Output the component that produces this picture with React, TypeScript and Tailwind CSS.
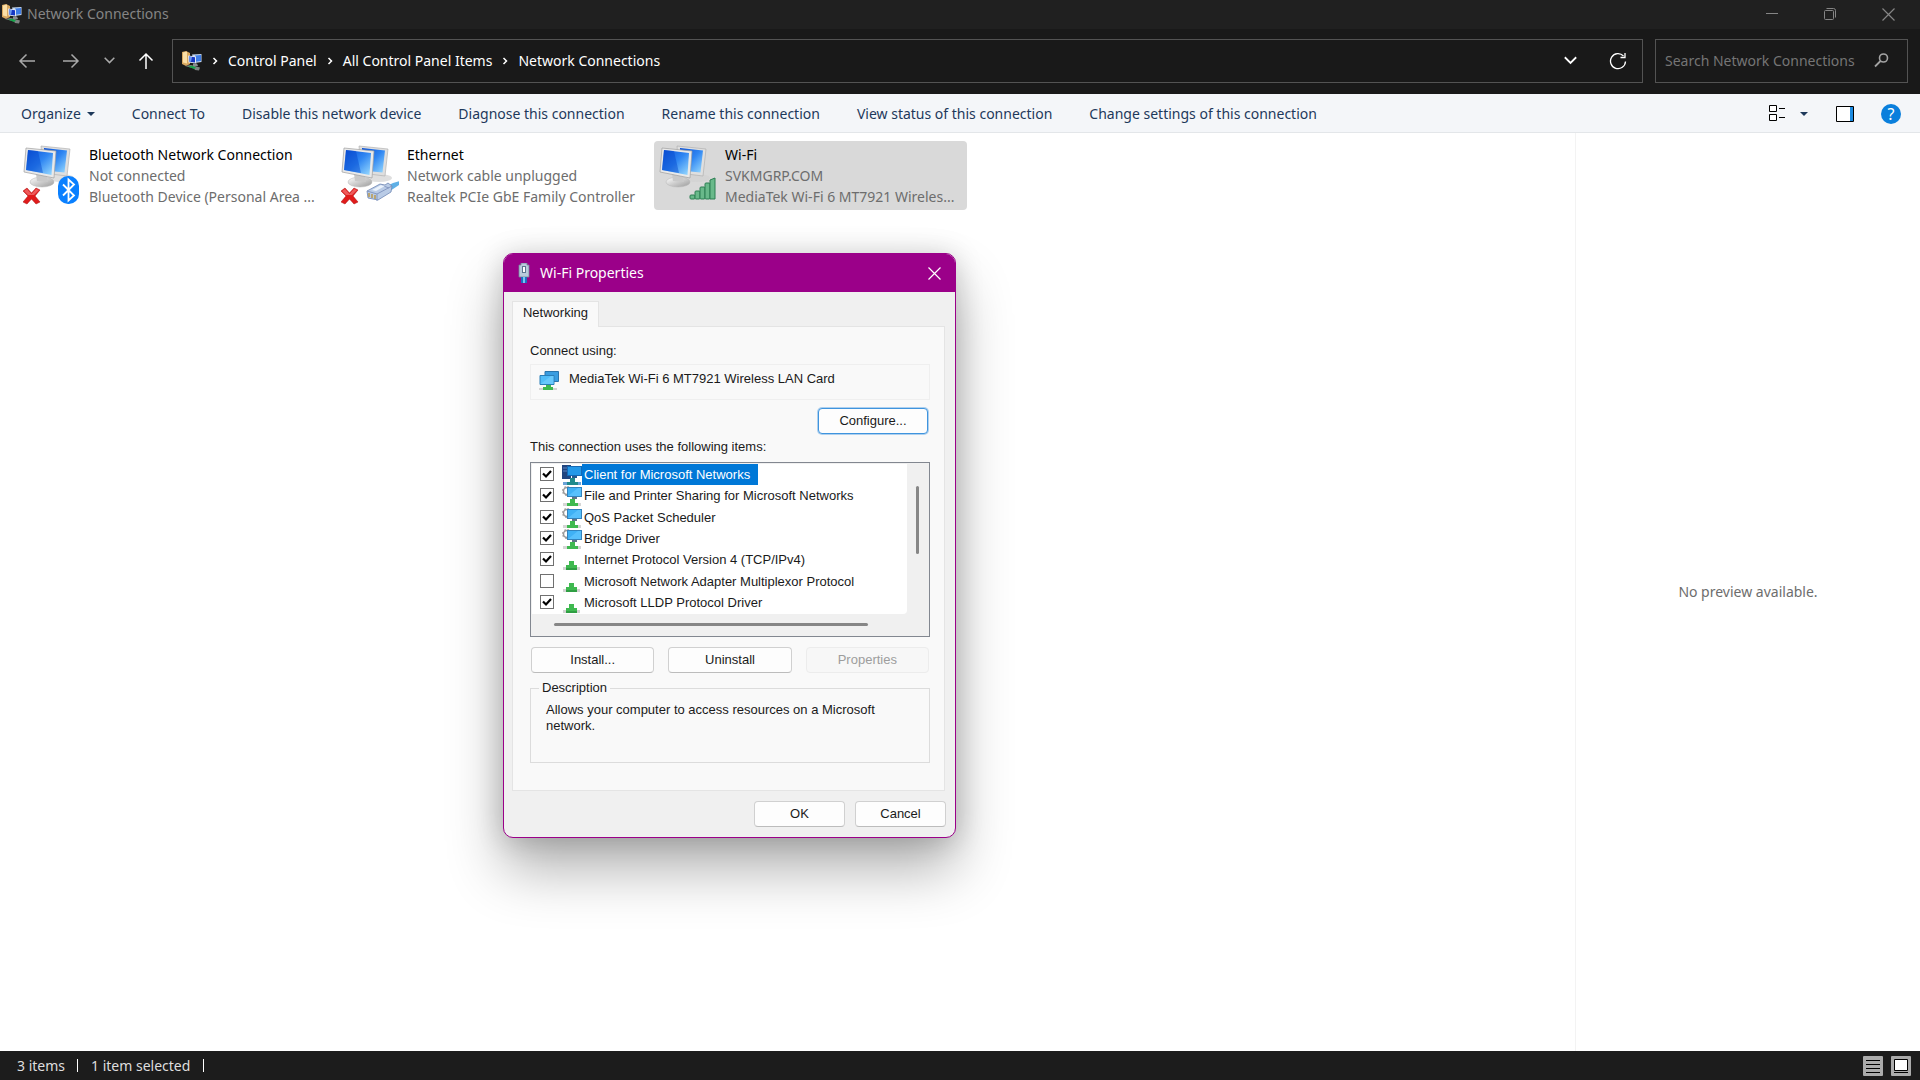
import { useState, type ReactNode } from "react";

interface Connection {
  name: string;
  status: string;
  device: string;
  kind: "bluetooth" | "ethernet" | "wifi";
}

const connections: Connection[] = [
  {
    name: "Bluetooth Network Connection",
    status: "Not connected",
    device: "Bluetooth Device (Personal Area ...",
    kind: "bluetooth",
  },
  {
    name: "Ethernet",
    status: "Network cable unplugged",
    device: "Realtek PCIe GbE Family Controller",
    kind: "ethernet",
  },
  {
    name: "Wi-Fi",
    status: "SVKMGRP.COM",
    device: "MediaTek Wi-Fi 6 MT7921 Wireles...",
    kind: "wifi",
  },
];

const commands = [
  "Connect To",
  "Disable this network device",
  "Diagnose this connection",
  "Rename this connection",
  "View status of this connection",
  "Change settings of this connection",
];

const crumbs = ["Control Panel", "All Control Panel Items", "Network Connections"];

interface Item {
  label: string;
  icon: "client" | "service" | "protocol";
  checked: boolean;
}

const initialItems: Item[] = [
  { label: "Client for Microsoft Networks", icon: "client", checked: true },
  { label: "File and Printer Sharing for Microsoft Networks", icon: "service", checked: true },
  { label: "QoS Packet Scheduler", icon: "service", checked: true },
  { label: "Bridge Driver", icon: "service", checked: true },
  { label: "Internet Protocol Version 4 (TCP/IPv4)", icon: "protocol", checked: true },
  { label: "Microsoft Network Adapter Multiplexor Protocol", icon: "protocol", checked: false },
  { label: "Microsoft LLDP Protocol Driver", icon: "protocol", checked: true },
];

function FolderNetworkIcon() {
  return (
    <svg width="20" height="20" viewBox="0 0 20 20" className="shrink-0">
      <path d="M0 1l4-1 4 2v11l-4 2-4-2z" fill="#d9a860" />
      <path d="M1 1.500l4-1v12l-4-1z" fill="#fbdfa6" />
      <path d="M10 3.500l9.500-.5v8l-7 1z" fill="#c3d6ee" />
      <path d="M13 4.500l6-.5v6l-5 .8z" fill="#3f7de6" />
      <path d="M6 4.500l8 1v7l-7.500-1z" fill="#dfe7f2" />
      <path d="M7 5.500l6 .8v5.200l-5.500-.8z" fill="#1637c4" />
      <path d="M7 5.500l3 .4-1 4.900-1.500-.1z" fill="#6d97f0" />
      <path d="M11 12.500h4l1 2.500h-5z" fill="#8c9094" />
      <path d="M3 15l6-1 9 2.500-1 3-4-.5-1-1.500z" fill="#7d8482" />
      <path d="M6 15.500l4-.8 4 1.800-2 1.500z" fill="#16a34a" />
    </svg>
  );
}

function Chevron({ down = false, size = 8 }: { down?: boolean; size?: number }) {
  return (
    <svg width={size} height={size} viewBox="0 0 8 8" fill="none" stroke="currentColor" strokeWidth="1.1">
      {down ? <path d="M0.500 2l3.500 3.500L7.500 2" /> : <path d="M2.500 1l3 3-3 3" strokeWidth="1.500" />}
    </svg>
  );
}

function Arrow({ d }: { d: string }) {
  return (
    <svg width="18" height="18" viewBox="0 0 18 18" fill="none" stroke="currentColor" strokeWidth="1.500">
      <path d={d} />
    </svg>
  );
}

function CaretDown() {
  return (
    <svg width="8" height="4" viewBox="0 0 8 4">
      <path d="M0 0h8L4 4z" fill="currentColor" />
    </svg>
  );
}

function CloseIcon() {
  return (
    <svg width="13" height="13" viewBox="0 0 13 13" fill="none" stroke="currentColor" strokeWidth="1.2">
      <path d="M0.500 0.500l12 12M12.500 0.500l-12 12" />
    </svg>
  );
}

function ConnectionIcon({ kind }: { kind: Connection["kind"] }) {
  const id = `screen-${kind}`;
  return (
    <svg width="58" height="60" viewBox="0 0 58 60" className="shrink-0">
      <defs>
        <linearGradient id={id} x1="0" y1="0" x2="1" y2="1">
          <stop offset="0" stopColor="#0a4fd6" />
          <stop offset="0.500" stopColor="#2f86f2" />
          <stop offset="1" stopColor="#9bdcff" />
        </linearGradient>
        <linearGradient id={`${id}-base`} x1="0" y1="0" x2="1" y2="1">
          <stop offset="0" stopColor="#ffffff" />
          <stop offset="1" stopColor="#9a9a9a" />
        </linearGradient>
      </defs>
      <ellipse cx="38" cy="33" rx="13" ry="4" fill="#d2d2d2" opacity="0.7" />
      <path d="M18 1l29 3-3 27-24-3z" fill="#dfdfdf" stroke="#a9a9a9" strokeWidth="0.600" />
      <path d="M21 3l23 2.500-2.500 22-20-2z" fill={`url(#${id})`} />
      <ellipse cx="19" cy="37" rx="12" ry="5" fill={`url(#${id}-base)`} stroke="#b5b5b5" strokeWidth="0.500" />
      <path d="M13 29l11 2 1 6-11-1z" fill="#c9c9c9" />
      <path d="M3 3l30 3-2 27L1 27z" fill="#e9e9e9" stroke="#9f9f9f" strokeWidth="0.700" />
      <path d="M5 5l25 3-1.500 22L3 25z" fill={`url(#${id})`} />
      <path d="M5 5l10 1 5 22-17-3z" fill="#0446cd" opacity="0.450" />
      {kind !== "wifi" && (
        <g>
          <path
            d="M0 46l4-3 4.500 5L13 43l4 2-5 6 5 6-4 2-4.500-5L4 59l-4-2 5-6z"
            fill="#e01b1b"
            stroke="#a80f0f"
            strokeWidth="0.500"
          />
          <path d="M1 46l3-2 4.500 5L13 44l3 1-5 5-6 0z" fill="#f16a6a" opacity="0.800" />
        </g>
      )}
      {kind === "bluetooth" && (
        <g>
          <rect x="35" y="31" width="21" height="28" rx="10" fill="#0a80ff" />
          <path d="M40 39.500l11 11-5.500 5v-21l5.500 5-11 11" fill="none" stroke="#fff" strokeWidth="1.800" />
        </g>
      )}
      {kind === "ethernet" && (
        <g>
          <path d="M44 42l8-4 7-2-1 4-9 6z" fill="#5fb0e6" />
          <path d="M26 46l13-7 5 1 3-2 4 3-1 6-13 8-10-2z" fill="#b9cbe6" stroke="#6f86b4" strokeWidth="0.800" />
          <path d="M26 46l10 3 15-8M36 49v7M40 40l8 3" fill="none" stroke="#7f93bd" strokeWidth="0.900" />
          <path d="M28 48v4M31 49v4M34 50v4" stroke="#b99b50" strokeWidth="1.500" />
          <path d="M31 45l9-5 4 1-9 5z" fill="#eaf2fc" />
        </g>
      )}
      {kind === "wifi" && (
        <g fill="#69b98a" stroke="#2d7f53" strokeWidth="1">
          <rect x="31" y="50" width="5" height="4" rx="1" />
          <rect x="36" y="46" width="5" height="8" rx="1" />
          <rect x="41" y="42" width="5" height="12" rx="1" />
          <rect x="46" y="38" width="5" height="16" rx="1" />
          <path d="M51 35l5-2v21h-5z" />
        </g>
      )}
    </svg>
  );
}

function ItemIcon({ icon }: { icon: Item["icon"] }) {
  return (
    <svg width="20" height="20" viewBox="0 0 20 20" className="shrink-0">
      {icon === "service" && (
        <g>
          <circle cx="5" cy="5" r="3.500" fill="none" stroke="#9a9a9a" strokeWidth="1.500" />
          <circle cx="5" cy="5" r="4.600" fill="none" stroke="#9a9a9a" strokeWidth="1" strokeDasharray="1.800 1.800" />
          <rect x="5.500" y="1.500" width="14" height="9" fill="#3fb1f5" stroke="#3383bd" />
          <path d="M6 10L16 2h3v8z" fill="#63c6ff" opacity="0.700" />
          <path d="M10 11h5v2h-5z" fill="#5f7486" />
          <path d="M1 17h18v3H1z" fill="#d6d6d6" />
          <path d="M8 13h5v4h3v3H5v-3h3z" fill="#3fb950" />
        </g>
      )}
      {icon === "client" && (
        <g>
          <path d="M0 0h9v14H0z" fill="#20457f" />
          <path d="M1 3h4M1 6h4" stroke="#5d87c4" />
          <rect x="5.500" y="1.500" width="14" height="9" fill="#2398e8" stroke="#1469b5" />
          <path d="M10 11h5v2h-5z" fill="#24598f" />
          <path d="M1 17h18v3H1z" fill="#6aa3d8" />
          <path d="M8 13h5v4h3v3H5v-3h3z" fill="#1f8a8c" />
        </g>
      )}
      {icon === "protocol" && (
        <g>
          <path d="M1 17h17v3H1z" fill="#d3d3d3" />
          <path d="M7 11h5v4h3v4H4v-4h3z" fill="#3fb950" />
          <path d="M4 18h11v2H4z" fill="#2f9e43" />
        </g>
      )}
    </svg>
  );
}

function DialogButton({
  children,
  className = "border-[#d0d0d0] border-b-[#bcbcbc]",
  disabled = false,
}: {
  children: ReactNode;
  className?: string;
  disabled?: boolean;
}) {
  return (
    <button
      type="button"
      disabled={disabled}
      className={`h-[26px] rounded border bg-[#fdfdfd] text-center disabled:border-[#ececec] disabled:bg-[#f7f7f7] disabled:text-[#9d9d9d] ${className}`}
    >
      {children}
    </button>
  );
}

function WifiProperties() {
  const [items, setItems] = useState(initialItems);

  const toggle = (index: number) => {
    setItems(items.map((item, i) => (i === index ? { ...item, checked: !item.checked } : item)));
  };

  return (
    <section
      role="dialog"
      aria-labelledby="dialog-title"
      className="absolute top-[253px] left-[503px] w-[453px] overflow-hidden rounded-[10px] border border-[#9b0089] bg-[#f0f0f0] font-['Liberation_Sans',Arial,sans-serif] text-[13px] leading-4 text-[#1a1a1a] shadow-[0_32px_56px_rgba(0,0,0,0.30),0_2px_28px_rgba(0,0,0,0.18)]"
    >
      <header className="flex h-[38px] items-center bg-[#9b0089] pr-[14px] pl-[14px] text-white">
        <svg width="12" height="20" viewBox="0 0 12 20" className="mr-[10px]">
          <path d="M3 0h6v2h2v12H1V2h2z" fill="#b9cbdc" stroke="#71859b" strokeWidth="0.800" />
          <path d="M4 3h4v7H4z" fill="#5d7690" />
          <path d="M5 4h2v5H5z" fill="#fff" />
          <path d="M3 14h6v6H3z" fill="#1d6fc0" />
          <path d="M5 14h2v6H5z" fill="#74c6f5" />
        </svg>
        <h2 id="dialog-title" className="font-['Noto_Sans',sans-serif] text-sm">
          Wi-Fi Properties
        </h2>
        <button type="button" aria-label="Close dialog" className="ml-auto">
          <CloseIcon />
        </button>
      </header>

      <div className="px-2 pt-[9px]">
        <div role="tablist" className="flex">
          <button
            type="button"
            role="tab"
            aria-selected="true"
            className="z-10 -mb-px h-[26px] w-[87px] border border-b-0 border-[#e4e4e4] bg-[#f9f9f9] pb-1"
          >
            Networking
          </button>
        </div>
        <div role="tabpanel" className="mr-[2px] flex flex-col border border-[#e4e4e4] bg-[#f9f9f9] pt-4 pr-[14px] pb-[27px] pl-[17px]">
          <p>Connect using:</p>
          <div className="mt-[5px] flex h-9 items-start border border-[#efefef] pt-[6px] pl-2">
            <svg width="20" height="20" viewBox="0 0 20 20" className="mr-[10px]">
              <path d="M6 .5h13.500v10H6z" fill="#3a9de0" stroke="#2a75ac" />
              <path d="M1 4.500h14v9H1z" fill="#52bdf8" stroke="#2b7fb8" />
              <path d="M1.500 13L12 5h2.500v8z" fill="#7ad0ff" opacity="0.600" />
              <path d="M0 17h18v2H0z" fill="#d3d3d3" />
              <path d="M7 14h5v2h2v3H4v-3h3z" fill="#3fb950" />
            </svg>
            <span>MediaTek Wi-Fi 6 MT7921 Wireless LAN Card</span>
          </div>
          <DialogButton className="mt-2 mr-[2px] w-[110px] self-end border-[#3f94de] ring-1 ring-[#3f94de]/40">
            Configure...
          </DialogButton>
          <p className="mt-[5px]">This connection uses the following items:</p>

          <div className="mt-[7px] border border-[#828790] bg-[#f0f0f0] p-px">
            <div className="flex">
              <ul className="grid h-[150px] flex-1 grid-rows-7 rounded-br bg-white">
                {items.map((item, index) => (
                  <li key={item.label}>
                    <label className="flex h-full items-center">
                      <span className="relative mb-[2px] ml-2 flex size-[14px]">
                        <input
                          type="checkbox"
                          checked={item.checked}
                          onChange={() => toggle(index)}
                          className="size-[14px] appearance-none border border-[#707070] bg-white"
                        />
                        {item.checked && (
                          <svg viewBox="0 0 14 14" className="pointer-events-none absolute inset-0" fill="none">
                            <path d="M3 6.500l3 3L11 4" stroke="#000" strokeWidth="2.200" />
                          </svg>
                        )}
                      </span>
                      <span className="ml-2 flex">
                        <ItemIcon icon={item.icon} />
                      </span>
                      <span
                        className={
                          index === 0
                            ? "flex h-full items-center bg-[#0078d7] pr-2 pl-[2px] text-white"
                            : "flex h-full items-center pl-[2px]"
                        }
                      >
                        {item.label}
                      </span>
                    </label>
                  </li>
                ))}
              </ul>
              <div className="w-[21px] pt-[22px] pl-[9px]">
                <div className="h-[68px] w-[3px] rounded-full bg-[#868686]" />
              </div>
            </div>
            <div className="h-[21px] pt-[9px] pr-[60px] pl-[22px]">
              <div className="h-[3px] rounded-full bg-[#868686]" />
            </div>
          </div>

          <div className="mt-[10px] grid grid-cols-3 gap-[14px] px-px">
            <DialogButton>Install...</DialogButton>
            <DialogButton>Uninstall</DialogButton>
            <DialogButton disabled>Properties</DialogButton>
          </div>

          <fieldset className="mt-[7px] h-[83px] border border-[#dcdcdc] pl-[15px]">
            <legend className="-ml-[7px] px-[3px]">Description</legend>
            <p className="mt-[6px] pr-10">Allows your computer to access resources on a Microsoft network.</p>
          </fieldset>
        </div>
      </div>

      <footer className="flex justify-end gap-[10px] py-[10px] pr-[9px]">
        <DialogButton className="w-[91px] border-[#d0d0d0] border-b-[#bcbcbc]">OK</DialogButton>
        <DialogButton className="w-[91px] border-[#d0d0d0] border-b-[#bcbcbc]">Cancel</DialogButton>
      </footer>
    </section>
  );
}

export default function App() {
  return (
    <div className="relative flex min-h-screen flex-col bg-white font-['Noto_Sans',sans-serif] text-sm text-black">
      <header className="flex h-[29px] items-center bg-[#202020] pb-px pl-[2px] text-[#858585]">
        <FolderNetworkIcon />
        <h1 className="ml-[5px]">Network Connections</h1>
        <div className="ml-auto flex items-center gap-[46px] pr-[25px]">
          <button type="button" aria-label="Minimize">
            <svg width="12" height="12" viewBox="0 0 12 12" stroke="currentColor">
              <path d="M0 5.500h12" />
            </svg>
          </button>
          <button type="button" aria-label="Restore">
            <svg width="12" height="12" viewBox="0 0 12 12" fill="none" stroke="currentColor">
              <rect x="0.500" y="2.500" width="9" height="9" rx="1" />
              <path d="M2.500 0.500h7a2 2 0 0 1 2 2v7" />
            </svg>
          </button>
          <button type="button" aria-label="Close">
            <CloseIcon />
          </button>
        </div>
      </header>

      <nav className="flex h-[65px] items-center bg-[#191919] pr-3 pb-[2px] pl-[18px] text-white">
        <button type="button" aria-label="Back" className="text-[#a9a9a9]">
          <Arrow d="M17 9H2M8.500 2.500L2 9l6.500 6.500" />
        </button>
        <button type="button" aria-label="Forward" className="ml-[26px] text-[#a9a9a9]">
          <Arrow d="M1 9h15M9.500 2.500L16 9l-6.500 6.500" />
        </button>
        <button type="button" aria-label="Recent locations" className="ml-6 text-[#a9a9a9]">
          <Chevron down size={11} />
        </button>
        <button type="button" aria-label="Up" className="ml-[22px]">
          <Arrow d="M9 17V2M2.500 8.500L9 2l6.500 6.500" />
        </button>
        <div className="ml-[17px] flex h-11 flex-1 items-center border border-[#535353] pr-[15px] pl-[9px]">
          <FolderNetworkIcon />
          {crumbs.map((crumb) => (
            <span key={crumb} className="flex items-center">
              <span className="mx-[9px]">
                <Chevron />
              </span>
              <a href="#">{crumb}</a>
            </span>
          ))}
          <button type="button" aria-label="Previous locations" className="ml-auto">
            <Chevron down size={13} />
          </button>
          <button type="button" aria-label="Refresh" className="ml-8">
            <svg width="18" height="18" viewBox="0 0 18 18" fill="none" stroke="currentColor" strokeWidth="1.300">
              <path d="M16.500 9.500A7.500 7.500 0 1 1 14.500 4" />
              <path d="M16 1v4.500h-4.500" />
            </svg>
          </button>
        </div>
        <div className="ml-3 flex h-11 w-[253px] items-center border border-[#535353] pr-[18px] pl-[9px]">
          <input
            type="search"
            aria-label="Search Network Connections"
            placeholder="Search Network Connections"
            className="min-w-0 flex-1 bg-transparent outline-none placeholder:text-[#757575]"
          />
          <svg width="15" height="15" viewBox="0 0 15 15" fill="none" stroke="#a3a3a3">
            <circle cx="9.500" cy="5" r="4" strokeWidth="1.600" />
            <path d="M6.500 8L1 13.500" strokeWidth="1.800" />
          </svg>
        </div>
      </nav>

      <div
        role="toolbar"
        className="flex h-[39px] items-center gap-[37px] border-b border-[#e3e6e9] bg-[#f4f6f9] pt-px pr-[19px] pl-[21px] text-[#1e395b]"
      >
        <button type="button" className="flex items-center gap-[6px]">
          Organize <CaretDown />
        </button>
        {commands.map((command) => (
          <button type="button" key={command}>
            {command}
          </button>
        ))}
        <div className="ml-auto flex items-center">
          <button type="button" aria-label="View layout">
            <svg width="17" height="17" viewBox="0 0 17 17" fill="#fff" stroke="#000">
              <path d="M.5.5h7v6h-7zM.5 9.500h7v6h-7z" />
              <path d="M10 3.500h6M10 12.500h6" />
            </svg>
          </button>
          <button type="button" aria-label="More view options" className="ml-[14px]">
            <CaretDown />
          </button>
          <button type="button" aria-label="Preview pane" className="ml-[28px]">
            <svg width="18" height="16" viewBox="0 0 18 16">
              <path d="M.5.5h17v15H.5z" fill="#fff" stroke="#000" />
              <path d="M14 1h3v14h-3z" fill="#1b8ae0" />
            </svg>
          </button>
          <button
            type="button"
            aria-label="Help"
            className="ml-[27px] flex size-5 items-center justify-center rounded-full bg-[#0a7fdc] text-base leading-5 text-white"
          >
            ?
          </button>
        </div>
      </div>

      <main className="flex flex-1">
        <ul className="flex flex-1 items-start gap-[5px] pt-2 pl-[18px]">
          {connections.map((connection) => (
            <li
              key={connection.name}
              className={
                connection.kind === "wifi"
                  ? "flex h-[69px] w-[313px] rounded-sm bg-[#d9d9d9] pl-[5px]"
                  : "flex h-[69px] w-[313px] pl-[5px]"
              }
            >
              <div className="pt-1">
                <ConnectionIcon kind={connection.kind} />
              </div>
              <div className="ml-2 pt-[3px] leading-[21px] whitespace-nowrap text-[#6d6d6d]">
                <p className="text-black">{connection.name}</p>
                <p>{connection.status}</p>
                <p>{connection.device}</p>
              </div>
            </li>
          ))}
        </ul>
        <aside className="flex w-[345px] items-center justify-center border-l border-[#f3f3f3] text-[#6d6d6d]">
          No preview available.
        </aside>
      </main>

      <footer className="flex h-[29px] items-center bg-[#1c1c1c] pr-[9px] pl-[17px] text-[#dedede]">
        <span className="mr-3">3 items</span>
        <span className="h-[13px] w-px bg-white" />
        <span className="mx-[13px]">1 item selected</span>
        <span className="h-[13px] w-px bg-white" />
        <div className="ml-auto flex gap-2">
          <button type="button" aria-label="Details view">
            <svg width="20" height="20" viewBox="0 0 20 20">
              <rect width="20" height="20" rx="1" fill="#ababab" />
              <path d="M3 4.500h14M3 8.500h14M3 12.500h14M3 16.500h14" stroke="#000" />
            </svg>
          </button>
          <button type="button" aria-label="Large icons view">
            <svg width="20" height="20" viewBox="0 0 20 20">
              <rect width="20" height="20" rx="1" fill="#ababab" />
              <path d="M3.500 3.500h13v11h-13z" fill="#fff" stroke="#000" />
              <path d="M3 16.500h14" stroke="#000" />
            </svg>
          </button>
        </div>
      </footer>

      <WifiProperties />
    </div>
  );
}
